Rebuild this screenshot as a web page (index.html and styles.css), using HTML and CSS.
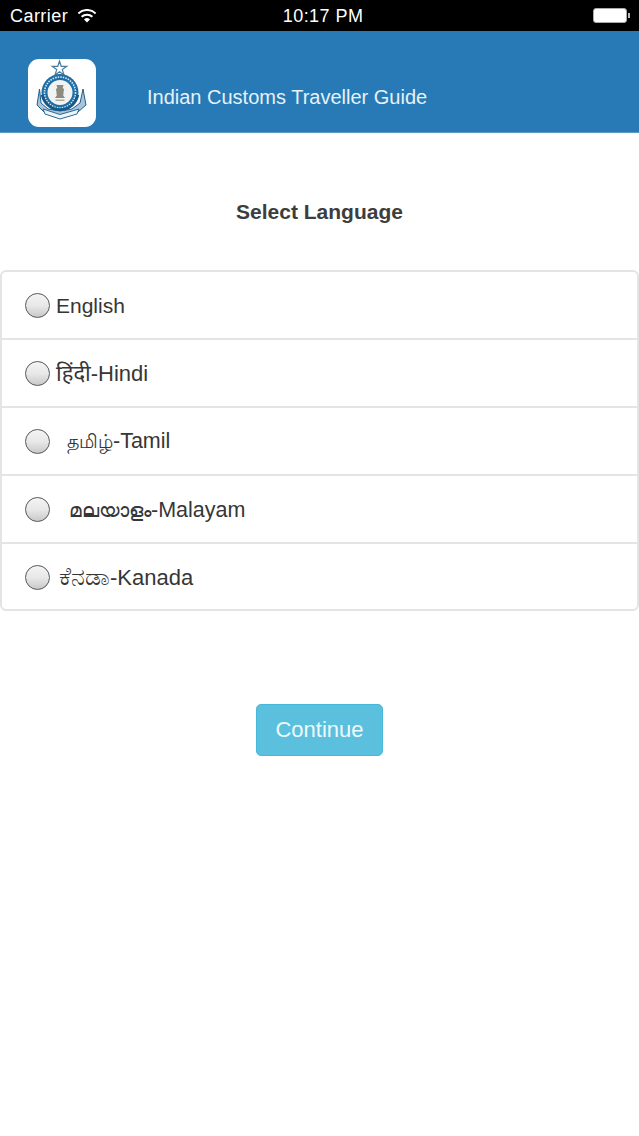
FILE: index.html
```html
<!DOCTYPE html>
<html lang="en">
<head>
<meta charset="utf-8">
<title>Indian Customs Traveller Guide</title>
<link rel="stylesheet" href="styles.css">
</head>
<body>
<div class="status">
  <div class="status-left">
    <span>Carrier</span>
    <svg class="wifi" viewBox="0 0 20 14" width="20" height="14"><path d="M10 13.600 7 10.400a4.300 4.300 0 0 1 6 0Z" fill="#fff"/><path d="M4.600 7.800a7.800 7.800 0 0 1 10.800 0" fill="none" stroke="#fff" stroke-width="2"/><path d="M1.400 4.400a12.500 12.500 0 0 1 17.200 0" fill="none" stroke="#fff" stroke-width="2"/></svg>
  </div>
  <div class="status-time">10:17 PM</div>
  <div class="status-right">
    <div class="battery"><div class="battery-fill"></div></div>
    <div class="battery-tip"></div>
  </div>
</div>
<header class="header">
  <div class="logo">
    <svg viewBox="0 0 68 68" width="68" height="68">
      <path d="M31.500 2 33.200 7.300 38.800 7.300 34.300 10.600 36 16 31.500 12.700 27 16 28.700 10.600 24.200 7.300 29.800 7.300Z" fill="#fff" stroke="#4d7c9f" stroke-width="1.200"/>
      <path d="M11.500 30 9 46 16 53 32 58.500 50 53 58 46 55 30 52 44 44 50 32 52 20 50 13 44Z" fill="#a9c4d8" stroke="#1f5f8e" stroke-width="1"/>
      <path d="M15 50 32 55.500 51 50 49 55 32 60 17 55Z" fill="#eef3f6" stroke="#2c6a97" stroke-width="1"/>
      <circle cx="32" cy="33.500" r="18.500" fill="#1f6ea6"/>
      <circle cx="32" cy="33.500" r="15.500" fill="none" stroke="#dce9f2" stroke-width="1.600" stroke-dasharray="1.500 1.100"/>
      <circle cx="32" cy="33.500" r="12.500" fill="#f1f3f3"/>
      <path d="M12.800 36a19.500 19.500 0 0 0 38.400 0l-3 0a16.500 16.500 0 0 1-32.400 0Z" fill="#15598a"/>
      <path d="M28.500 26h7l-.8 3 1.300 1-.8 6.500 1.800 2.500H27l1.800-2.500-.8-6.500 1.300-1Z" fill="#8d8a7e"/>
      <path d="M27.500 40.500h9v1.400h-9Z" fill="#b0aa99"/>
    </svg>
  </div>
  <div class="title">Indian Customs Traveller Guide</div>
</header>
<main class="main">
  <h1 class="heading">Select Language</h1>
  <ul class="list">
    <li class="row"><span class="radio"></span><span class="label en">English</span></li>
    <li class="row"><span class="radio"></span><span class="label hi">हिंदी-Hindi</span></li>
    <li class="row"><span class="radio"></span><span class="label shift-ta"><span class="ta">தமிழ்</span>-Tamil</span></li>
    <li class="row"><span class="radio"></span><span class="label shift-ml"><span class="ml">മലയാളം</span>-Malayam</span></li>
    <li class="row"><span class="radio"></span><span class="label shift-kn"><span class="kn">ಕೆನಡಾ</span>-Kanada</span></li>
  </ul>
  <div class="actions"><button class="continue">Continue</button></div>
</main>
</body>
</html>
```

FILE: styles.css
```css
* { box-sizing: border-box; }
html, body { margin: 0; padding: 0; }
body {
  width: 639px;
  height: 1136px;
  overflow: hidden;
  background: #fff;
  color: #333;
  font-family: "Liberation Sans", "Noto Sans", "DejaVu Sans", sans-serif;
}
.status {
  height: 31px;
  background: #000;
  color: #fff;
  display: flex;
  align-items: center;
  justify-content: space-between;
  padding: 1px 9px 0 10px;
  font-size: 18px;
}
.status-left { display: flex; align-items: center; gap: 9px; letter-spacing: 0.45px; }
.wifi { margin-top: -1px; }
.status-time {
  flex: 1;
  text-align: center;
  font-size: 18px;
  letter-spacing: 0.45px;
  padding-right: 44px;
}
.status-right { display: flex; align-items: center; margin-top: -1px; }
.battery {
  width: 34px;
  height: 15px;
  border: 1px solid #aaa;
  border-radius: 3px;
  background: #fff;
}
.battery-tip { width: 2px; height: 5px; background: #bbb; margin-left: 1px; }
.header {
  height: 102px;
  background: #277ab5;
  border-bottom: 1px solid #5a9ac6;
  display: flex;
  align-items: flex-end;
  padding: 0 0 5px 28px;
}
.logo {
  width: 68px;
  height: 68px;
  background: #fff;
  border-radius: 11px;
  flex: none;
  overflow: hidden;
}
.logo svg { display: block; }
.title {
  color: #e6f1f8;
  font-size: 20px;
  margin: 0 0 18px 51px;
  line-height: 23px;
}
.main { display: flex; flex-direction: column; }
.heading {
  margin: 67px 0 0;
  font-size: 21px;
  line-height: 24px;
  font-weight: 700;
  text-align: center;
  color: #3d3d3d;
}
.list {
  list-style: none;
  margin: 46px 0 0;
  padding: 0;
  border: 2px solid #e4e4e4;
  border-radius: 6px;
  height: 341px;
}
.row {
  height: 68px;
  display: flex;
  align-items: center;
  padding: 1px 0 0 23px;
  border-bottom: 2px solid #e4e4e4;
}
.row:last-child { border-bottom: 0; height: 65px; }
.radio {
  width: 25px;
  height: 25px;
  flex: none;
  border-radius: 50%;
  border: 1.5px solid #55585c;
  background: linear-gradient(#f4f4f4, #e8e8e8 50%, #c9c9cb);
}
.label { font-size: 21.5px; color: #363636; margin-left: 6px; line-height: 26px; }
.en { font-size: 21px; }
.hi { font-size: 22px; }
.shift-ta { margin-left: 17px; }
.shift-ml { margin-left: 19px; }
.shift-kn { margin-left: 9px; font-size: 22px; }
.ta { font-size: 19px; }
.ml { font-size: 19.8px; font-weight: 400; }
.kn { font-size: 25.4px; }
.actions { display: flex; justify-content: center; margin-top: 93px; }
.continue {
  width: 127px;
  height: 52px;
  padding: 0;
  background: #5bc0de;
  border: 1px solid #46b8da;
  border-radius: 5px;
  color: #eef9fc;
  font-family: inherit;
  font-size: 22px;
}
```
